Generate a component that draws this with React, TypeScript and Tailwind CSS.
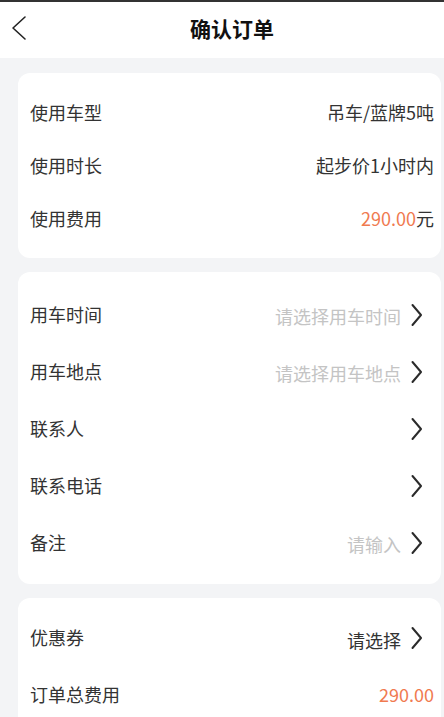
const Chevron = () => (
  <svg width="13" height="24" viewBox="0 0 13 24" className="shrink-0">
    <path d="M2.5 2 L11 12 L2.5 22" fill="none" stroke="#2b2b2b" strokeWidth="2" strokeLinecap="round" strokeLinejoin="round" />
  </svg>
);

type Row = { label: string; value?: React.ReactNode; arrow?: boolean; tone?: "muted" | "dark" };

const InfoRow = ({ label, value, arrow, tone = "dark" }: Row) => (
  <div className="flex items-center justify-between h-full">
    <span className="text-[18px] text-[#333]">{label}</span>
    <div className="flex items-center gap-[9px]">
      {value && (
        <span className={tone === "muted" ? "text-[18px] text-[#c4c4c4] mt-[4px]" : "text-[18px] text-[#333]"}>
          {value}
        </span>
      )}
      {arrow && <Chevron />}
    </div>
  </div>
);

export default function App() {
  return (
    <div
      className="w-[444px] h-[717px] overflow-hidden bg-[#f3f4f6] border-t-2 border-[#333]"
      style={{ fontFamily: '"Noto Sans CJK SC", "Noto Sans", sans-serif' }}
    >
      <header className="relative h-[56px] bg-white flex items-center justify-center pl-[20px]">
        <button className="absolute left-[11px] top-[13px]">
          <svg width="16" height="26" viewBox="0 0 16 26">
            <path d="M14 2 L2 13 L14 24" fill="none" stroke="#222" strokeWidth="1.6" strokeLinecap="round" strokeLinejoin="round" />
          </svg>
        </button>
        <h1 className="text-[21px] font-bold text-[#111] -mt-[2px]">确认订单</h1>
      </header>

      <div className="flex flex-col gap-[14px] pt-[15px] pl-[18px] pr-[3px]">
        <section className="bg-white rounded-[12px] pl-[12px] pr-[7px] py-[13px]">
          {[
            { label: "使用车型", value: "吊车/蓝牌5吨" },
            { label: "使用时长", value: "起步价1小时内" },
            {
              label: "使用费用",
              value: (
                <>
                  <span className="text-[#f07a50]">290.00</span>元
                </>
              ),
            },
          ].map((r) => (
            <div key={r.label} className="h-[53px]">
              <InfoRow {...r} />
            </div>
          ))}
        </section>

        <section className="bg-white rounded-[12px] pl-[12px] pr-[18px] pt-[14px] pb-[13px]">
          {[
            { label: "用车时间", value: "请选择用车时间", tone: "muted" as const },
            { label: "用车地点", value: "请选择用车地点", tone: "muted" as const },
            { label: "联系人" },
            { label: "联系电话" },
            { label: "备注", value: "请输入", tone: "muted" as const },
          ].map((r) => (
            <div key={r.label} className="h-[57px]">
              <InfoRow {...r} arrow />
            </div>
          ))}
        </section>

        <section className="bg-white rounded-[12px] pl-[12px] pr-[18px] pt-[11px] pb-[13px]">
          <div className="h-[57px]">
            <InfoRow label="优惠券" value={<span className="mt-[6px] inline-block">请选择</span>} arrow />
          </div>
          <div className="h-[57px] flex items-center justify-between">
            <span className="text-[18px] text-[#333]">订单总费用</span>
            <span className="text-[18px] text-[#f07a50] mr-[-11px]">290.00</span>
          </div>
        </section>
      </div>
    </div>
  );
}
